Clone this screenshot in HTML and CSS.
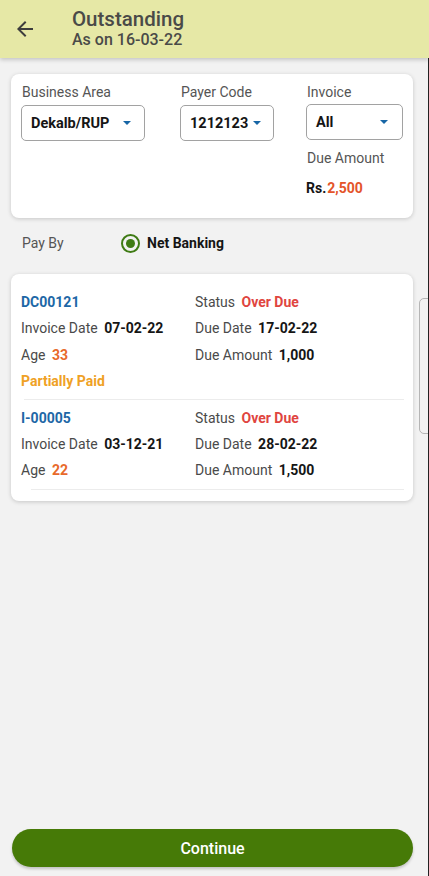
FILE: index.html
```html
<!DOCTYPE html>
<html lang="en">
<head>
    <meta charset="UTF-8">
    <meta name="viewport" content="width=device-width, initial-scale=1.0">
    <title>Outstanding</title>
    <link rel="stylesheet" href="styles.css">
</head>
<body>

<div class="screen">
    <header class="app-bar">
        <svg class="back-icon" width="24" height="24" viewBox="0 0 24 24">
            <path d="M20 11H7.83l5.59-5.59L12 4l-8 8 8 8 1.41-1.41L7.83 13H20v-2z" fill="#3d3d3d"/>
        </svg>
        <div class="titles">
            <div class="title">Outstanding</div>
            <div class="subtitle">As on 16-03-22</div>
        </div>
    </header>

    <div class="content">
        <div class="card filter-card">
            <div class="filter-col">
                <div class="field-label">Business Area</div>
                <div class="dropdown">
                    <span>Dekalb/RUP</span>
                    <span class="caret"></span>
                </div>
            </div>
            <div class="filter-col">
                <div class="field-label">Payer Code</div>
                <div class="dropdown dropdown-tight">
                    <span>1212123</span>
                    <span class="caret"></span>
                </div>
            </div>
            <div class="filter-col">
                <div class="field-label">Invoice</div>
                <div class="dropdown dropdown-invoice">
                    <span>All</span>
                    <span class="caret"></span>
                </div>
                <div class="field-label due-label">Due Amount</div>
                <div class="due-total">Rs.<span class="amount">2,500</span></div>
            </div>
        </div>

        <div class="pay-by">
            <span class="pay-label">Pay By</span>
            <span class="radio"><span class="radio-dot"></span></span>
            <span class="pay-option">Net Banking</span>
        </div>

        <!-- invoice list -->
        <div class="card invoice-card">
            <div class="invoice">
                <div class="inv-grid">
                    <div class="inv-id">DC00121</div>
                    <div>Status <b class="overdue">Over Due</b></div>
                    <div>Invoice Date <b>07-02-22</b></div>
                    <div>Due Date <b>17-02-22</b></div>
                    <div>Age <b class="age">33</b></div>
                    <div>Due Amount <b>1,000</b></div>
                </div>
                <div class="partial">Partially Paid</div>
            </div>
            <div class="divider divider-first"></div>
            <div class="invoice">
                <div class="inv-grid">
                    <div class="inv-id">I-00005</div>
                    <div>Status <b class="overdue">Over Due</b></div>
                    <div>Invoice Date <b>03-12-21</b></div>
                    <div>Due Date <b>28-02-22</b></div>
                    <div>Age <b class="age">22</b></div>
                    <div>Due Amount <b>1,500</b></div>
                </div>
            </div>
            <div class="divider"></div>
        </div>
    </div>

    <button class="continue-btn">Continue</button>

    <div class="peek-box"></div>
    <div class="edge-line"></div>
</div>

</body>
</html>
```

FILE: styles.css
```css
body {
    margin: 0;
    font-family: Roboto, 'Noto Sans', sans-serif;
    background-color: #f2f2f2;
    color: #4a4a4a;
}

.screen {
    position: relative;
    height: 876px;
    display: flex;
    flex-direction: column;
    overflow: hidden;
}

.app-bar {
    height: 58px;
    background-color: #e6e8a6;
    display: flex;
    align-items: center;
    padding-left: 13px;
    box-shadow: 0 2px 4px rgba(0, 0, 0, 0.18);
    position: relative;
    z-index: 1;
}

.back-icon {
    margin-right: 35px;
}

.titles {
    display: flex;
    flex-direction: column;
}

.title {
    font-size: 20.5px;
    font-weight: 500;
    line-height: 22px;
    color: #4a4a48;
}

.subtitle {
    font-size: 16px;
    font-weight: 500;
    line-height: 20px;
    color: #4a4a48;
}

.content {
    flex: 1;
    padding: 16px 16px 0 11px;
}

.card {
    background-color: #fff;
    border-radius: 8px;
    box-shadow: 0 1px 4px rgba(0, 0, 0, 0.18);
}

.filter-card {
    display: grid;
    grid-template-columns: 159px 126px 1fr;
    padding: 9px 11px 20px 10px;
    height: 115px;
}

.field-label {
    font-size: 14px;
    line-height: 18px;
    color: #555;
    padding-left: 1px;
}

.dropdown {
    margin-top: 4px;
    height: 34px;
    border: 1px solid #a2a2a2;
    border-radius: 5px;
    display: flex;
    align-items: center;
    justify-content: space-between;
    padding: 0 13px 0 9px;
    font-size: 14.5px;
    font-weight: bold;
    color: #151515;
    width: 100px;
}

.dropdown-tight {
    width: auto;
    justify-content: flex-start;
    gap: 5px;
    display: inline-flex;
    padding-right: 12px;
}

.dropdown-invoice {
    margin-top: 3px;
    width: 72px;
    padding-right: 14px;
}

.caret {
    width: 0;
    height: 0;
    border-left: 4px solid transparent;
    border-right: 4px solid transparent;
    border-top: 4px solid #1766a6;
}

.due-label {
    margin-top: 9px;
}

.due-total {
    margin-top: 12px;
    font-size: 14px;
    font-weight: bold;
    line-height: 18px;
    color: #151515;
}

.amount {
    color: #e4542a;
    margin-left: 1px;
}

.pay-by {
    display: flex;
    align-items: center;
    height: 50px;
    padding-left: 11px;
    margin-bottom: 6px;
}

.pay-label {
    font-size: 14px;
    color: #555;
    width: 99px;
}

.radio {
    width: 15px;
    height: 15px;
    border: 2.5px solid #3f7b14;
    border-radius: 50%;
    display: flex;
    align-items: center;
    justify-content: center;
    margin-right: 7px;
}

.radio-dot {
    width: 9px;
    height: 9px;
    border-radius: 50%;
    background-color: #3f7b14;
}

.pay-option {
    font-size: 14px;
    font-weight: bold;
    color: #151515;
}

.invoice-card {
    padding: 15px 9px 6px 10px;
}

.inv-grid {
    display: grid;
    grid-template-columns: 174px 1fr;
    font-size: 14px;
    line-height: 26.3px;
    color: #4a4a4a;
}

.inv-grid b {
    color: #151515;
    margin-left: 3px;
}

.inv-id {
    color: #1d67a6;
    font-weight: bold;
}

.inv-grid b.overdue {
    color: #e0453f;
}

.inv-grid b.age {
    color: #e8692a;
}

.partial {
    font-size: 14px;
    line-height: 26px;
    font-weight: bold;
    color: #efa125;
}

.divider {
    height: 1px;
    background-color: #ececec;
    margin: 5px 0 5px 10px;
}

.divider-first {
    margin-left: 3px;
}

.continue-btn {
    margin: 0 16px 9px 12px;
    height: 38px;
    border: none;
    border-radius: 19px;
    background-color: #467a07;
    color: #fff;
    font-family: Roboto, 'Noto Sans', sans-serif;
    font-size: 16px;
    font-weight: 500;
    box-shadow: 0 2px 3px rgba(0, 0, 0, 0.2);
}

.peek-box {
    position: absolute;
    left: 419px;
    top: 298px;
    width: 20px;
    height: 134px;
    border: 1px solid #b5b5b5;
    border-radius: 5px;
}

.edge-line {
    position: absolute;
    right: 0;
    top: 0;
    bottom: 0;
    width: 1px;
    background-color: #222;
}
```
